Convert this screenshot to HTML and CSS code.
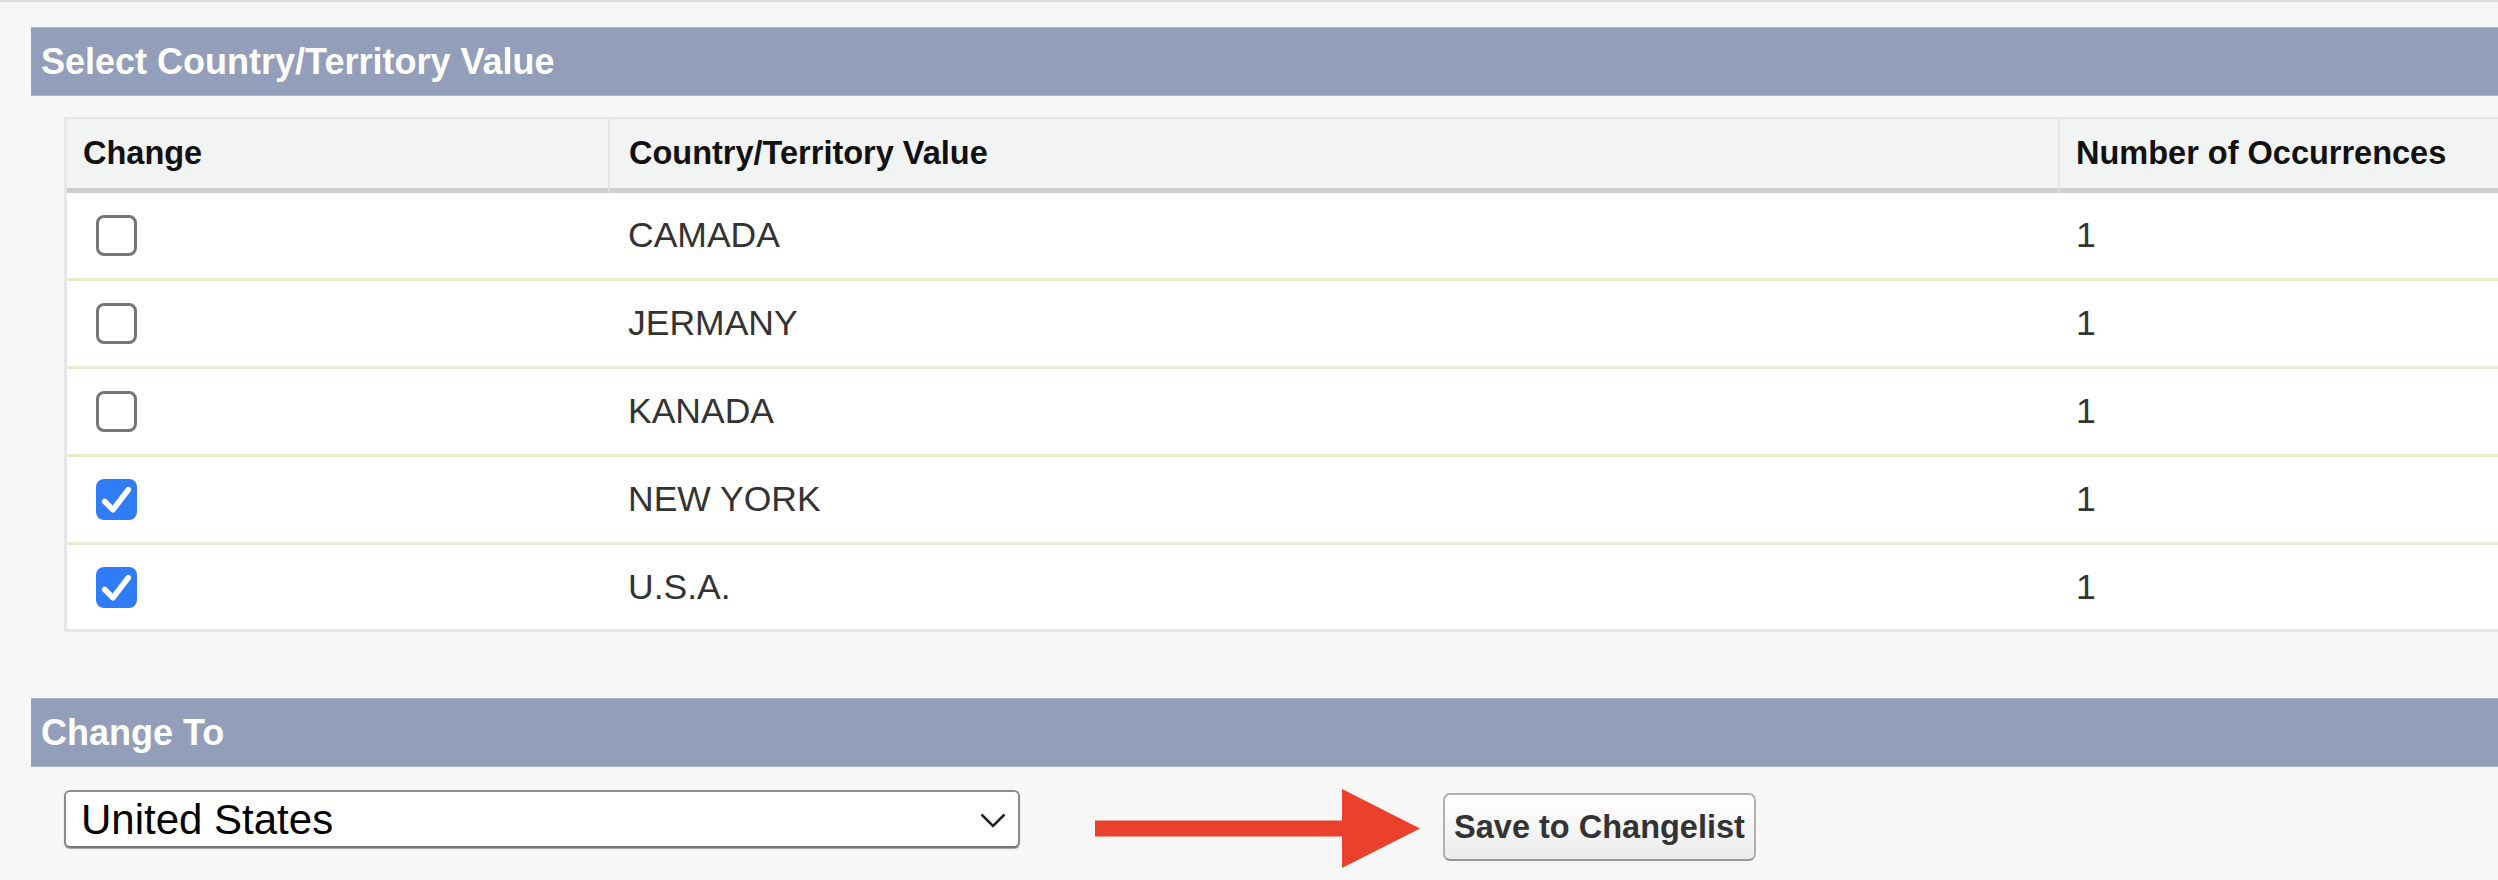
FILE: index.html
```html
<!DOCTYPE html>
<html lang="en">

<head>
    <meta charset="UTF-8" />
    <title>Country/Territory Values</title>
    <link rel="stylesheet" href="styles.css">
</head>

<body>
    <div class="page">
        <div class="section-bar">Select Country/Territory Value</div>

        <div class="values">
            <table class="list">
                <thead>
                    <tr>
                        <th class="col-change">Change</th>
                        <th class="col-value">Country/Territory Value</th>
                        <th class="col-count">Number of Occurrences</th>
                    </tr>
                </thead>
                <tbody>
                    <tr>
                        <td class="col-change"><span class="cb"></span></td>
                        <td class="col-value">CAMADA</td>
                        <td class="col-count">1</td>
                    </tr>
                    <tr>
                        <td class="col-change"><span class="cb"></span></td>
                        <td class="col-value">JERMANY</td>
                        <td class="col-count">1</td>
                    </tr>
                    <tr>
                        <td class="col-change"><span class="cb"></span></td>
                        <td class="col-value">KANADA</td>
                        <td class="col-count">1</td>
                    </tr>
                    <tr>
                        <td class="col-change">
                            <span class="cb on"><svg viewBox="0 0 40 40"><polyline points="8.5,22 16.5,30 31.5,10.5" /></svg></span>
                        </td>
                        <td class="col-value">NEW YORK</td>
                        <td class="col-count">1</td>
                    </tr>
                    <tr>
                        <td class="col-change">
                            <span class="cb on"><svg viewBox="0 0 40 40"><polyline points="8.5,22 16.5,30 31.5,10.5" /></svg></span>
                        </td>
                        <td class="col-value">U.S.A.</td>
                        <td class="col-count">1</td>
                    </tr>
                </tbody>
            </table>
        </div>

        <div class="section-bar section-bar-2">Change To</div>

        <div class="change-row">
            <div class="select-wrap">
                <select class="country-select">
                    <option selected>United States</option>
                    <option>Canada</option>
                    <option>Germany</option>
                </select>
                <svg class="chevron" viewBox="0 0 26 15"><polyline points="1.5,1.5 13,13 24.5,1.5" /></svg>
            </div>

            <svg class="arrow" viewBox="0 0 325 79">
                <rect x="0" y="31.5" width="250" height="16" />
                <polygon points="247,0 325,39.5 247,79" />
            </svg>

            <button class="btn">Save to Changelist</button>
        </div>
    </div>
</body>

</html>
```

FILE: styles.css
```css
*,
*::before,
*::after {
    box-sizing: border-box;
}

html,
body {
    margin: 0;
    padding: 0;
    background: #f7f7f7;
    font-family: "Liberation Sans", Arial, Helvetica, sans-serif;
    overflow: hidden;
}

body {
    border-top: 2px solid #dedede;
}

.page {
    width: 2700px;
    padding: 25px 0 0 31px;
}

.section-bar {
    height: 69px;
    display: flex;
    align-items: center;
    padding-left: 10px;
    background: #939eba;
    border-top: 1px solid #a9b2c9;
    border-bottom: 1px solid #a9b2c9;
    color: #fff;
    font-size: 36px;
    font-weight: bold;
}

.section-bar-2 {
    margin-top: 66px;
}

/* list table */

.values {
    padding: 21px 0 0 33px;
}

.list {
    width: 2600px;
    table-layout: fixed;
    border-collapse: separate;
    border-spacing: 0;
    background: #fff;
    border-top: 2px solid #e4e6e8;
    border-left: 3px solid #e4e6e8;
    border-bottom: 3px solid #e4e6e8;
}

.list th,
.list td {
    text-align: left;
    vertical-align: middle;
    padding: 0;
}

.list th {
    height: 74px;
    background: #f2f3f3;
    border-bottom: 5px solid #cecece;
    color: #111;
    font-size: 32.5px;
    font-weight: bold;
}

.list th.col-value,
.list th.col-count {
    border-left: 2px solid #e3e5e6;
}

.list th.col-change {
    width: 541px;
    padding-left: 16px;
}

.list th.col-value {
    width: 1450px;
    padding-left: 19px;
}

.list th.col-count {
    padding-left: 16px;
}

.list td {
    height: 88px;
    border-bottom: 3px solid #ece7cf;
    color: #333;
    font-size: 35.5px;
}

.list tbody tr:last-child td {
    height: 84px;
    border-bottom: none;
}

.list td.col-change {
    padding-left: 29px;
}

.list td.col-value {
    padding-left: 20px;
}

.list td.col-count {
    padding-left: 18px;
}

.cb {
    display: block;
    width: 41px;
    height: 41px;
    border: 3px solid #767676;
    border-radius: 8px;
    background: #fff;
}

.cb.on {
    background: #2f7cf6;
    border: none;
}

.cb svg {
    display: block;
    width: 41px;
    height: 41px;
    fill: none;
    stroke: #fff;
    stroke-width: 5.5;
    stroke-linecap: round;
    stroke-linejoin: round;
}

/* change to */

.change-row {
    display: flex;
    align-items: flex-start;
    padding: 23px 0 0 33px;
}

.select-wrap {
    position: relative;
    width: 956px;
    height: 58px;
}

.country-select {
    -webkit-appearance: none;
    appearance: none;
    width: 100%;
    height: 100%;
    margin: 0;
    padding: 0 0 0 15px;
    background: #fff;
    border: 2px solid #8c8c8c;
    border-bottom-color: #777;
    border-radius: 6px;
    box-shadow: 0 1px 1px rgba(0, 0, 0, .35);
    font-family: "Liberation Sans", Arial, Helvetica, sans-serif;
    font-size: 42px;
    color: #000;
}

.chevron {
    position: absolute;
    left: 916px;
    top: 23px;
    width: 26px;
    height: 15px;
    fill: none;
    stroke: #222;
    stroke-width: 2.5;
    pointer-events: none;
}

.arrow {
    width: 325px;
    height: 79px;
    margin: -1px 0 0 75px;
    fill: #e9412b;
}

.btn {
    width: 313px;
    height: 68px;
    margin: 3px 0 0 23px;
    padding: 0;
    background: linear-gradient(#ffffff, #ececec);
    border: 2px solid #b0b0b0;
    border-bottom-color: #999;
    border-radius: 7px;
    font-family: "Liberation Sans", Arial, Helvetica, sans-serif;
    font-size: 32.5px;
    font-weight: bold;
    color: #333;
}
```
